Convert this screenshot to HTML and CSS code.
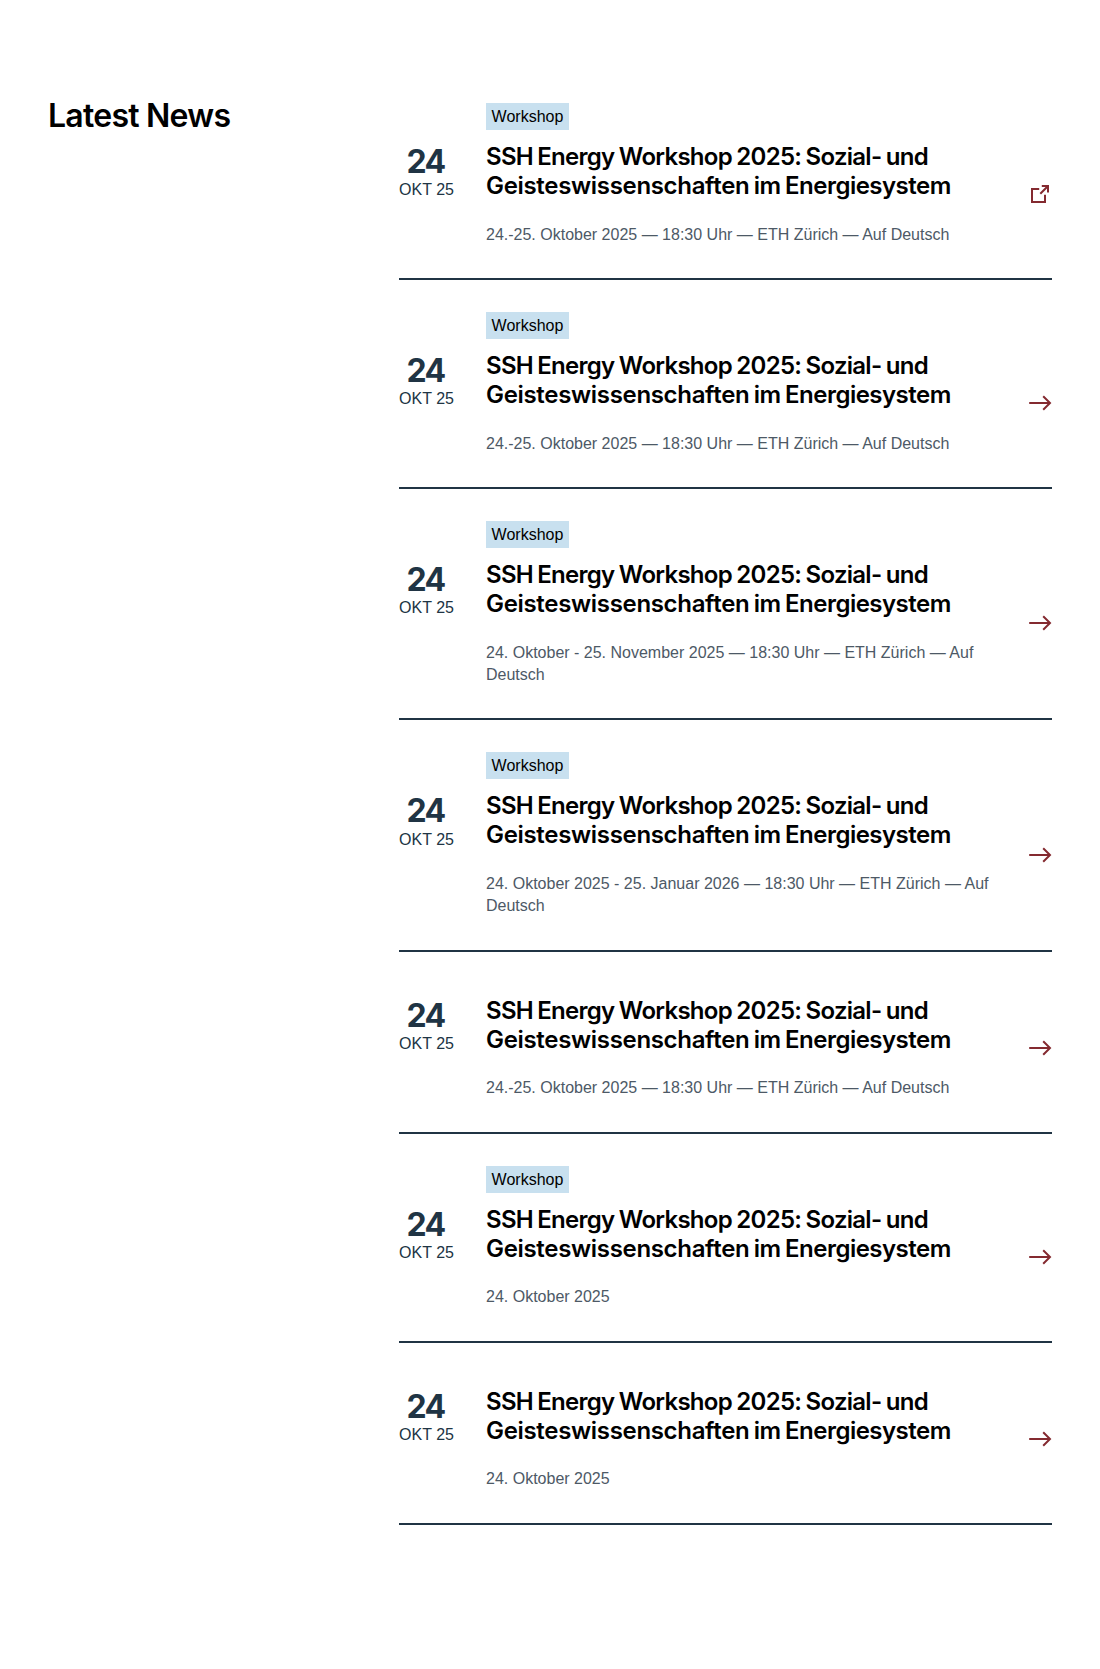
FILE: index.html
```html
<!DOCTYPE html>
<html lang="de">
<head>
<meta charset="utf-8">
<title>Latest News</title>
<link rel="stylesheet" href="styles.css">
</head>
<body>
<svg class="sprite" aria-hidden="true">
  <symbol id="arrow" viewBox="0 0 24 24"><path d="M1.2 12H22M15.2 5.2L22 12l-6.800 6.800" fill="none" stroke="currentColor" stroke-width="2"/></symbol>
  <symbol id="external" viewBox="0 0 24 24"><path d="M11.200 7H4v13h13v-7.200M12.300 11.700L20 4M13.800 4H20v6.500" fill="none" stroke="currentColor" stroke-width="2"/></symbol>
</svg>
<main class="news">
  <h2 class="news-heading">Latest News</h2>
  <div class="news-list">
    <article class="item">
      <span class="tag">Workshop</span>
      <div class="date"><span class="day">24</span><span class="month">OKT 25</span></div>
      <div class="body"><h3 class="title">SSH Energy Workshop 2025: Sozial- und<br><span class="long-word">Geisteswissenschaften</span> <span class="end">im Energiesystem</span></h3><p class="meta">24.-25. Oktober 2025 — 18:30 Uhr — ETH Zürich — Auf Deutsch</p></div>
      <svg class="icon"><use href="#external"/></svg>
    </article>
    <article class="item">
      <span class="tag">Workshop</span>
      <div class="date"><span class="day">24</span><span class="month">OKT 25</span></div>
      <div class="body"><h3 class="title">SSH Energy Workshop 2025: Sozial- und<br><span class="long-word">Geisteswissenschaften</span> <span class="end">im Energiesystem</span></h3><p class="meta">24.-25. Oktober 2025 — 18:30 Uhr — ETH Zürich — Auf Deutsch</p></div>
      <svg class="icon"><use href="#arrow"/></svg>
    </article>
    <article class="item">
      <span class="tag">Workshop</span>
      <div class="date"><span class="day">24</span><span class="month">OKT 25</span></div>
      <div class="body"><h3 class="title">SSH Energy Workshop 2025: Sozial- und<br><span class="long-word">Geisteswissenschaften</span> <span class="end">im Energiesystem</span></h3><p class="meta">24. Oktober - 25. November 2025 — 18:30 Uhr — ETH Zürich — Auf Deutsch</p></div>
      <svg class="icon"><use href="#arrow"/></svg>
    </article>
    <article class="item">
      <span class="tag">Workshop</span>
      <div class="date"><span class="day">24</span><span class="month">OKT 25</span></div>
      <div class="body"><h3 class="title">SSH Energy Workshop 2025: Sozial- und<br><span class="long-word">Geisteswissenschaften</span> <span class="end">im Energiesystem</span></h3><p class="meta">24. Oktober 2025 - 25. Januar 2026 — 18:30 Uhr — ETH Zürich — Auf Deutsch</p></div>
      <svg class="icon"><use href="#arrow"/></svg>
    </article>
    <article class="item">
      <div class="date"><span class="day">24</span><span class="month">OKT 25</span></div>
      <div class="body"><h3 class="title">SSH Energy Workshop 2025: Sozial- und<br><span class="long-word">Geisteswissenschaften</span> <span class="end">im Energiesystem</span></h3><p class="meta">24.-25. Oktober 2025 — 18:30 Uhr — ETH Zürich — Auf Deutsch</p></div>
      <svg class="icon"><use href="#arrow"/></svg>
    </article>
    <article class="item">
      <span class="tag">Workshop</span>
      <div class="date"><span class="day">24</span><span class="month">OKT 25</span></div>
      <div class="body"><h3 class="title">SSH Energy Workshop 2025: Sozial- und<br><span class="long-word">Geisteswissenschaften</span> <span class="end">im Energiesystem</span></h3><p class="meta">24. Oktober 2025</p></div>
      <svg class="icon"><use href="#arrow"/></svg>
    </article>
    <article class="item">
      <div class="date"><span class="day">24</span><span class="month">OKT 25</span></div>
      <div class="body"><h3 class="title">SSH Energy Workshop 2025: Sozial- und<br><span class="long-word">Geisteswissenschaften</span> <span class="end">im Energiesystem</span></h3><p class="meta">24. Oktober 2025</p></div>
      <svg class="icon"><use href="#arrow"/></svg>
    </article>
  </div>
</main>
</body>
</html>
```
FILE: styles.css
```css
* { box-sizing: border-box; }
body {
  margin: 0;
  background: #fff;
  color: #000;
  font: 16px/1.4 "Liberation Sans", Arial, sans-serif;
}
.sprite { display: none; }
.news {
  display: grid;
  grid-template-columns: 351px 653px;
  padding: 71px 48px 144px;
}
.news-heading {
  margin: 25px 0 0;
  font: 600 32px/40px Inter, sans-serif;
  letter-spacing: -0.75px;
}
.item {
  display: grid;
  grid-template-columns: 55px 510px 24px;
  column-gap: 32px;
  padding: 32px 0;
  border-bottom: 2px solid #203444;
}
.tag {
  grid-column: 2;
  justify-self: start;
  padding: 4px 5.6px;
  background: #c8e0ef;
  line-height: 19px;
}
.date {
  grid-column: 1;
  display: flex;
  flex-direction: column;
  align-items: center;
  padding-top: 15px;
  color: #203444;
  white-space: nowrap;
}
.day {
  margin-right: 2px;
  font: 700 32px/34.4px Inter, sans-serif;
  letter-spacing: -1.6px;
}
.month { line-height: 21.2px; }
.body { grid-column: 2; padding-top: 12px; }
.title {
  margin: 0 0 23.6px;
  font: 600 24px/29px Inter, sans-serif;
  letter-spacing: -0.72px;
  word-spacing: -1px;
  white-space: nowrap;
}
.long-word { letter-spacing: -0.32px; }
.end { letter-spacing: -0.52px; }
.meta { margin: 0; color: #4d5966; }
.icon {
  grid-column: 3;
  align-self: center;
  width: 24px;
  height: 24px;
  margin-top: 12px;
  color: #842a30;
}
```
